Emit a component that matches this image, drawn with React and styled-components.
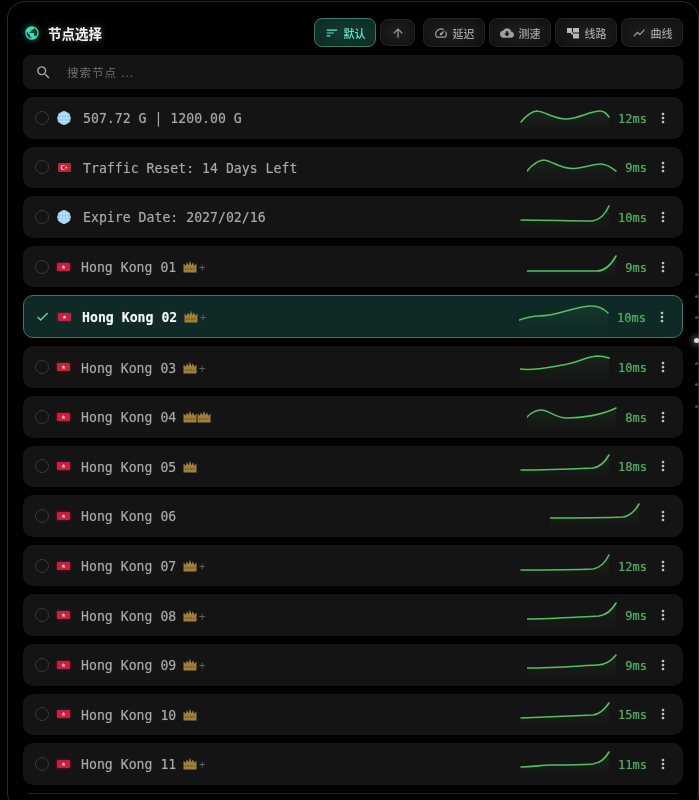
import React from 'react';
import styled, { createGlobalStyle } from 'styled-components';
import {
  MdPublic, MdSearch, MdSort, MdArrowUpward, MdOutlineSpeed, MdCloudDownload,
  MdShowChart, MdMoreVert, MdCheck,
} from 'react-icons/md';

const mono = `"DejaVu Sans Mono", "Noto Sans CJK SC", monospace`;
const sans = `Inter, "Noto Sans CJK SC", sans-serif`;

const Global = createGlobalStyle`
  html, body { margin: 0; padding: 0; background: #000; height: 800px; overflow: hidden; }
`;

const Panel = styled.div`
  box-sizing: border-box;
  height: 810px;
  margin: 1px 0 0 7px;
  padding: 15px 15px 0 15px;
  border: 1px solid #2a2a2a;
  border-radius: 18px;
  background: #000;
  overflow: hidden;
  filter: blur(0.3px);
`;

const Header = styled.div`
  display: flex;
  align-items: center;
  justify-content: space-between;
  height: 31px;
  margin-bottom: 7px;
`;

const Title = styled.div`
  display: flex;
  align-items: center;
  gap: 8px;
  margin-left: 1px;
  color: #f2f2f2;
  font: 600 13.5px ${sans};
  text-shadow: 0 0 6px rgba(255, 255, 255, 0.35);
  svg { color: #3fdcb8; filter: drop-shadow(0 0 3px rgba(63, 220, 184, 0.7)); }
`;

const Toolbar = styled.div`
  display: flex;
  align-items: center;
  gap: 4px;
`;

const ToolButton = styled.div`
  box-sizing: border-box;
  display: flex;
  align-items: center;
  justify-content: center;
  gap: 5px;
  width: ${(p) => (p.$narrow ? '35px' : '62px')};
  height: ${(p) => (p.$narrow ? '27px' : '29px')};
  margin-right: ${(p) => (p.$gap ? '4px' : '0')};
  border-radius: 8px;
  border: 1px solid ${(p) => (p.$active ? '#2f7f6b' : '#242424')};
  background: ${(p) => (p.$active
    ? 'radial-gradient(ellipse at center, #143a32, #0e2a25)'
    : 'radial-gradient(ellipse at center, #1f1f1f, #101010)')};
  color: ${(p) => (p.$active ? '#5fe6c4' : '#a0a0a0')};
  font: 500 11px ${sans};
  svg { flex: none; }
`;

const SearchBar = styled.div`
  display: flex;
  align-items: center;
  height: 34px;
  margin-bottom: 8px;
  padding-left: 12px;
  border-radius: 8px;
  background: #141414;
  color: #6e6e6e;
  font: 11.5px ${sans};
  letter-spacing: 1px;
  svg { color: #a5a5a5; margin-right: 15px; }
`;

const List = styled.div`
  display: flex;
  flex-direction: column;
  gap: 8px;
`;

const Row = styled.div`
  box-sizing: border-box;
  display: flex;
  align-items: center;
  height: ${(p) => (p.$selected ? '43px' : '41.6px')};
  padding: 0 12px 0 ${(p) => (p.$selected ? '11px' : '12px')};
  border-radius: 10px;
  border: ${(p) => (p.$selected ? '1px solid #2f7f6b' : 'none')};
  background: ${(p) => (p.$selected ? '#0f2a26' : '#141414')};
`;

const Radio = styled.span`
  box-sizing: border-box;
  flex: none;
  width: 14px;
  height: 14px;
  border: 1px solid #3a3a3a;
  border-radius: 50%;
`;

const Tick = styled(MdCheck)`
  flex: none;
  color: #4fdcb8;
`;

const FlagSlot = styled.span`
  flex: none;
  display: flex;
  justify-content: center;
  width: ${(p) => (p.$wide ? '16px' : '15px')};
  margin: 0 ${(p) => (p.$wide ? '11px' : '10px')} 0 7px;
`;

const Name = styled.span`
  padding-top: 2px;
  color: ${(p) => (p.$selected ? '#f4f4f4' : '#a6a6a6')};
  font: ${(p) => (p.$selected ? 700 : 400)} 13.2px ${mono};
  white-space: pre;
  text-shadow: 0 0 1px ${(p) => (p.$selected ? 'rgba(255,255,255,0.4)' : 'rgba(170,170,170,0.55)')};
`;

const Badges = styled.span`
  display: flex;
  align-items: center;
  margin-left: 7px;
`;

const Plus = styled.span`
  color: #5c5c5c;
  font: 12px ${sans};
  margin-left: 1px;
`;

const Right = styled.div`
  margin-left: auto;
  display: flex;
  align-items: center;
`;

const Spark = styled.svg`
  flex: none;
  width: 90px;
  height: 28px;
  margin-right: 8px;
`;

const Ms = styled.span`
  padding-top: 2px;
  color: #52a860;
  font: 12px ${mono};
  text-shadow: 0 0 1px rgba(82, 168, 96, 0.8);
  margin-right: 8px;
`;

const Menu = styled(MdMoreVert)`
  flex: none;
  color: #c4c4c4;
  margin-left: ${(p) => (p.$alone ? '7px' : '0')};
`;

const Divider = styled.div`
  height: 1px;
  margin: 8px 5px 0;
  background: #242424;
`;

/* quick-jump rail that sits over the right edge of the panel */
const Rail = styled.div`
  position: absolute;
  top: 273px;
  right: 0;
  display: flex;
  flex-direction: column;
  align-items: center;
  gap: 18.7px;
  width: 5px;
`;

const RailDot = styled.span`
  width: ${(p) => (p.$active ? '5px' : '3px')};
  height: ${(p) => (p.$active ? '5px' : '3px')};
  border-radius: 50%;
  background: ${(p) => (p.$active ? '#d8d8d8' : '#4a4a4a')};
  box-shadow: ${(p) => (p.$active ? '0 0 6px 2px rgba(255,255,255,0.35)' : 'none')};
`;

const Globe = () => (
  <svg width="14" height="14" viewBox="0 0 14 14">
    <circle cx="7" cy="7" r="6.8" fill="#8fcbee" />
    <g fill="none" stroke="#d4ecf9" strokeWidth="0.7">
      <ellipse cx="7" cy="7" rx="3" ry="6.6" />
      <path d="M7 .4v13.2M.4 7h13.2M1.4 3.6h11.2M1.4 10.4h11.2" />
    </g>
  </svg>
);

const FlagHK = () => (
  <svg width="13" height="8" viewBox="0 0 13 8" style={{ filter: 'drop-shadow(0 0 1px rgba(211,32,60,0.6))' }}>
    <rect width="13" height="8" rx="1" fill="#c81f3a" />
    <path d="M6.5 1.9 L7.1 3.4 L8.6 3.5 L7.4 4.5 L7.8 6 L6.5 5.2 L5.2 6 L5.6 4.5 L4.4 3.5 L5.9 3.4 Z" fill="#f7d4d8" />
  </svg>
);

const FlagTR = () => (
  <svg width="13" height="9" viewBox="0 0 13 9">
    <rect width="13" height="9" rx="1" fill="#c81f3a" />
    <circle cx="5.2" cy="4.5" r="2.5" fill="#f7d4d8" />
    <circle cx="6" cy="4.5" r="2" fill="#c81f3a" />
    <circle cx="8.4" cy="4.5" r="0.9" fill="#f7d4d8" />
  </svg>
);

const Crown = () => (
  <svg width="14" height="13" viewBox="0 0 14 13">
    <path d="M0.5 3.5 L2.8 5.8 L4 2.2 L5.6 5.2 L7 0.8 L8.4 5.2 L10 2.2 L11.2 5.8 L13.5 3.5 V12.5 H0.5 Z" fill="#a07f3a" />
    <path d="M2 9h10" stroke="#6f5726" strokeWidth="1.4" strokeDasharray="1.6 1" />
  </svg>
);

const RouteIcon = () => (
  <svg width="14" height="14" viewBox="0 0 14 14" fill="#b8b8b8">
    <rect x="1" y="2" width="5" height="5" />
    <rect x="7" y="2" width="6" height="4.5" />
    <rect x="5" y="6.5" width="2" height="2" />
    <rect x="7" y="7.5" width="6" height="5" />
  </svg>
);

const Sparkline = ({ d, id }) => (
  <Spark viewBox="0 0 90 28">
    <defs>
      <linearGradient id={id} x1="0" y1="0" x2="0" y2="1">
        <stop offset="0" stopColor="#4caf50" stopOpacity="0.1" />
        <stop offset="1" stopColor="#4caf50" stopOpacity="0" />
      </linearGradient>
    </defs>
    <path d={`${d} V28 H0 Z`} fill={`url(#${id})`} />
    <path d={d} fill="none" stroke="#52c060" strokeWidth="1.6" strokeLinecap="round" />
  </Spark>
);

const hk = (name, crowns, plus, curve, ms) => ({ name, flag: <FlagHK />, crowns, plus, curve, ms });

const nodes = [
  { name: '507.72 G | 1200.00 G', flag: <Globe />, wide: true, crowns: 0, curve: 'M1 18 C6 12 11 7 17 7 C26 8 34 15 46 15 C58 15 70 7 80 7 C84 7 87 10 89 13', ms: '12ms' },
  { name: 'Traffic Reset: 14 Days Left', flag: <FlagTR />, wide: true, crowns: 0, curve: 'M0 18 C5 12 11 7 17 7 C25 8 33 15.5 45 15.5 C55 15.5 65 11 74 11 C80 11 85 15 89 18', ms: '9ms' },
  { name: 'Expire Date: 2027/02/16', flag: <Globe />, wide: true, crowns: 0, curve: 'M1 17 C25 17 50 18 72 18 C80 17 85 12 89 3', ms: '10ms' },
  hk('Hong Kong 01', 1, true, 'M0 18 L70 18 C78 18 84 12 89 3', '9ms'),
  { ...hk('Hong Kong 02', 1, true, 'M0 17 C6 15 12 13 20 13 C40 13 55 3 73 3 C80 3 85 6 89 10', '10ms'), selected: true },
  hk('Hong Kong 03', 1, true, 'M0 16 C15 18 30 14 43 12 C57 10 65 4 77 3 C82 3 86 4 89 5', '10ms'),
  hk('Hong Kong 04', 2, false, 'M0 14 C4 10 9 7 14 7 C22 7 28 15 40 15 C55 15 75 12 89 5', '8ms'),
  hk('Hong Kong 05', 1, false, 'M1 18 C25 18 50 17 73 16 C80 15 85 10 89 3', '18ms'),
  hk('Hong Kong 06', 0, false, 'M0 16 C25 16 50 16 73 15 C80 14 85 9 89 2', ''),
  hk('Hong Kong 07', 1, true, 'M1 18 C25 18 50 18 73 17 C80 16 85 11 89 3', '12ms'),
  hk('Hong Kong 08', 1, true, 'M0 18 C25 18 50 16 72 15 C79 14 85 9 89 2', '9ms'),
  hk('Hong Kong 09', 1, true, 'M0 17 C25 17 50 15 70 14 C78 14 85 9 89 4', '9ms'),
  hk('Hong Kong 10', 1, false, 'M1 18 C25 17 50 16 73 15 C80 14 85 9 89 3', '15ms'),
  hk('Hong Kong 11', 1, true, 'M1 17 C15 17 20 15 30 15 C45 15 60 15 73 14 C80 13 85 9 89 2', '11ms'),
];

export default function App() {
  return (
    <>
      <Global />
      <Panel>
        <Header>
          <Title><MdPublic size={16} />节点选择</Title>
          <Toolbar>
            <ToolButton $active><MdSort size={14} />默认</ToolButton>
            <ToolButton $narrow $gap><MdArrowUpward size={14} /></ToolButton>
            <ToolButton><MdOutlineSpeed size={14} />延迟</ToolButton>
            <ToolButton><MdCloudDownload size={14} />测速</ToolButton>
            <ToolButton><RouteIcon />线路</ToolButton>
            <ToolButton><MdShowChart size={14} />曲线</ToolButton>
          </Toolbar>
        </Header>
        <SearchBar><MdSearch size={17} />搜索节点 ...</SearchBar>
        <List>
          {nodes.map((n, i) => (
            <Row key={n.name} $selected={n.selected}>
              {n.selected ? <Tick size={15} /> : <Radio />}
              <FlagSlot $wide={n.wide}>{n.flag}</FlagSlot>
              <Name $selected={n.selected}>{n.name}</Name>
              {n.crowns > 0 && (
                <Badges>
                  {Array.from({ length: n.crowns }, (_, c) => <Crown key={c} />)}
                  {n.plus && <Plus>+</Plus>}
                </Badges>
              )}
              <Right>
                <Sparkline d={n.curve} id={`spark${i}`} />
                {n.ms && <Ms>{n.ms}</Ms>}
                <Menu size={16} $alone={!n.ms} />
              </Right>
            </Row>
          ))}
        </List>
        <Divider />
      </Panel>
      <Rail>
        {[0, 1, 2, 3, 4, 5, 6].map((d) => <RailDot key={d} $active={d === 3} />)}
      </Rail>
    </>
  );
}
